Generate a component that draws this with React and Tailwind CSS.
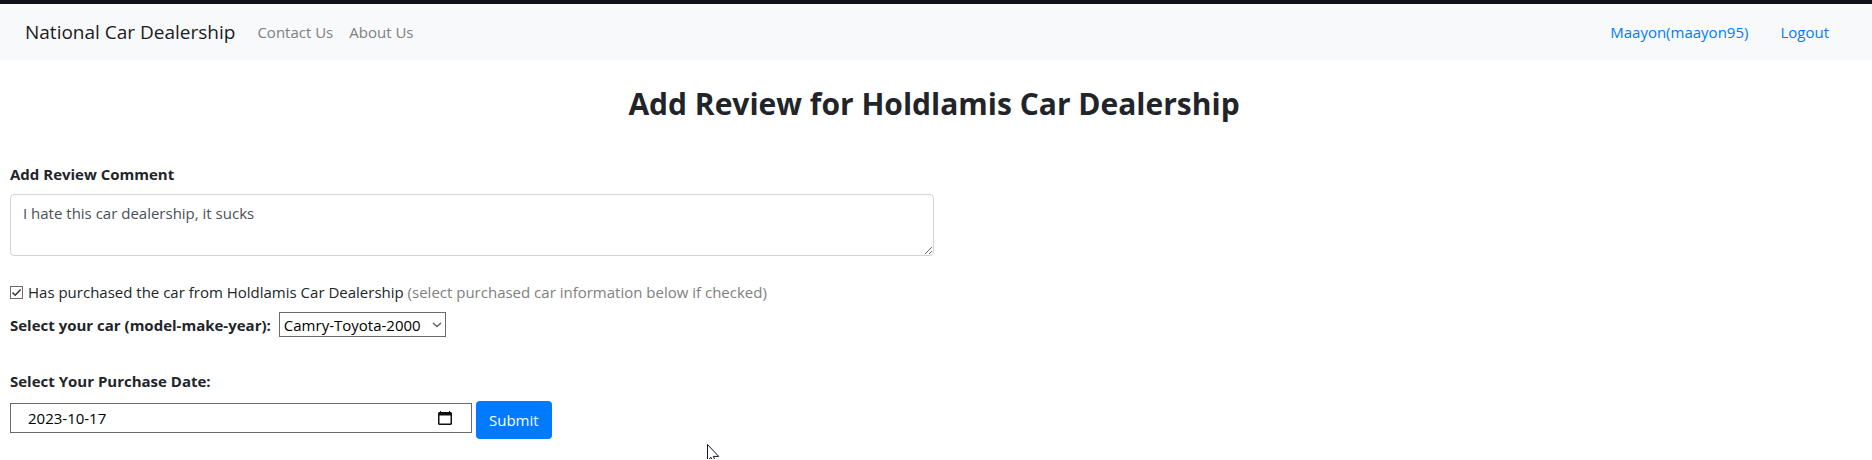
import { useState } from "react";

function NavBar() {
  return (
    <nav className="flex h-15 items-center border-t-4 border-[#100e17] bg-[#f8f9fb] pl-[25px] pr-[43px]">
      <a href="#home" className="text-[19px] text-[#1b1b1c]">
        National Car Dealership
      </a>
      <div className="ml-[22px] flex gap-4 text-[#7f8081]">
        <a href="#contact">Contact Us</a>
        <a href="#about">About Us</a>
      </div>
      <div className="ml-auto flex gap-8 text-[#007bff]">
        <a href="#profile">Maayon(maayon95)</a>
        <a href="#logout">Logout</a>
      </div>
    </nav>
  );
}

function CalendarIcon() {
  return (
    <svg width="14" height="14" viewBox="0 0 14 14" aria-hidden="true">
      <path d="M2 0h1v1h8V0h1v1h1l1 1v11l-1 1H1l-1-1V2l1-1h1z" fill="#111" />
      <path d="M1.500 4.500h11v8h-11z" fill="#fff" />
    </svg>
  );
}

function Pointer() {
  return (
    <svg
      className="pointer-events-none absolute left-[697px] top-[43px]"
      width="13"
      height="16"
      viewBox="0 0 13 16"
      aria-hidden="true"
    >
      <path
        d="M.5.5v16l3.500-3.200 2.400 5.200 2.300-1-2.400-5.100h5.400z"
        fill="#fff"
        stroke="#15151f"
      />
    </svg>
  );
}

export default function App() {
  const [comment, setComment] = useState("I hate this car dealership, it sucks");
  const [purchased, setPurchased] = useState(true);
  const [date, setDate] = useState("2023-10-17");

  return (
    <div className="bg-white font-['Open_Sans','Noto_Sans',sans-serif] text-[15px] leading-6 text-[#212529]">
      <NavBar />
      <main className="pb-5 pl-[10px] pr-[14px]">
        <h1 className="pt-6 text-center text-[30px] font-bold leading-10">
          Add Review for Holdlamis Car Dealership
        </h1>
        <form className="pt-[38px]" onSubmit={(e) => e.preventDefault()}>
          <label htmlFor="comment" className="block font-bold">
            Add Review Comment
          </label>
          <textarea
            id="comment"
            rows={2}
            value={comment}
            onChange={(e) => setComment(e.target.value)}
            className="mt-2 block h-[62px] w-1/2 rounded border border-[#ced4da] px-3 py-1.5 text-[#495057]"
          />

          <div className="mt-6 flex items-center">
            <input
              id="purchased"
              type="checkbox"
              checked={purchased}
              onChange={(e) => setPurchased(e.target.checked)}
              className="peer size-[13px] appearance-none border border-[#6b6b6b] bg-white"
            />
            <svg
              className="pointer-events-none invisible -ml-[13px] peer-checked:visible"
              width="13"
              height="13"
              viewBox="0 0 13 13"
              aria-hidden="true"
            >
              <path d="M2.500 6.500l2.700 2.700L10.600 3.600" fill="none" stroke="#333" strokeWidth="1.5" />
            </svg>
            <label htmlFor="purchased" className="ml-[5px]">
              Has purchased the car from Holdlamis Car Dealership{" "}
              <span className="text-[#808080]">
                (select purchased car information below if checked)
              </span>
            </label>
          </div>

          <div className="mt-2 flex items-center gap-2">
            <label htmlFor="car" className="font-bold">
              Select your car (model-make-year):
            </label>
            <div className="flex items-center">
              <select
                id="car"
                className="h-[25px] w-[167px] appearance-none border border-[#6b6b6b] bg-white pl-1 text-black"
              >
                <option>Camry-Toyota-2000</option>
              </select>
              <svg
                className="pointer-events-none -ml-[14px]"
                width="10"
                height="6"
                viewBox="0 0 10 6"
                aria-hidden="true"
              >
                <path d="M1 1l4 3.500L9 1" fill="none" stroke="#666" strokeWidth="1.6" />
              </svg>
            </div>
          </div>

          <label htmlFor="date" className="mt-8 block font-bold">
            Select Your Purchase Date:
          </label>
          <div className="relative mt-2 flex items-center gap-1">
            <div className="mb-1 flex h-[30px] w-1/4 items-center border border-[#6b6b6b] pl-[17px] pr-[19px]">
              <input
                id="date"
                type="text"
                value={date}
                onChange={(e) => setDate(e.target.value)}
                className="min-w-0 flex-1 bg-white text-black outline-none"
              />
              <button type="button" aria-label="Open calendar">
                <CalendarIcon />
              </button>
            </div>
            <button type="submit" className="h-[38px] rounded bg-[#007bff] px-[13px] text-white">
              Submit
            </button>
            <Pointer />
          </div>
        </form>
      </main>
    </div>
  );
}
